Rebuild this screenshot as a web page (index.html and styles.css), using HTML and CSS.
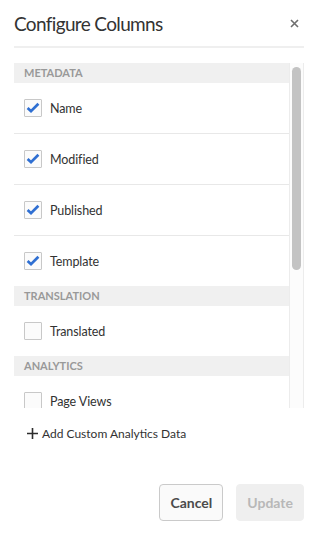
FILE: index.html
```html
<!DOCTYPE html>
<html lang="en">
<head>
    <meta charset="UTF-8">
    <meta name="viewport" content="width=device-width, initial-scale=1.0">
    <title>Configure Columns</title>
    <link rel="stylesheet" href="styles.css">
</head>
<body>
    <div class="dialog">
        <header class="dialog-header">
            <h1>Configure Columns</h1>
            <button class="close-btn" aria-label="Close">
                <svg width="9" height="9" viewBox="0 0 9 9"><path d="M1 1L8 8M8 1L1 8" stroke="#6e6e6e" stroke-width="1.6"/></svg>
            </button>
        </header>

        <div class="column-list">
            <div class="list-scroll">
                <div class="section-title">METADATA</div>
                <label class="row"><span class="checkbox"><svg width="16" height="16" viewBox="0 0 16 16"><path d="M2.6 8L6 11.2L13.4 3.8" fill="none" stroke="#2f6fd2" stroke-width="2.7"/></svg></span>Name</label>
                <label class="row"><span class="checkbox"><svg width="16" height="16" viewBox="0 0 16 16"><path d="M2.6 8L6 11.2L13.4 3.8" fill="none" stroke="#2f6fd2" stroke-width="2.7"/></svg></span>Modified</label>
                <label class="row"><span class="checkbox"><svg width="16" height="16" viewBox="0 0 16 16"><path d="M2.6 8L6 11.2L13.4 3.8" fill="none" stroke="#2f6fd2" stroke-width="2.7"/></svg></span>Published</label>
                <label class="row"><span class="checkbox"><svg width="16" height="16" viewBox="0 0 16 16"><path d="M2.6 8L6 11.2L13.4 3.8" fill="none" stroke="#2f6fd2" stroke-width="2.7"/></svg></span>Template</label>

                <div class="section-title">TRANSLATION</div>
                <label class="row"><span class="checkbox"></span>Translated</label>

                <div class="section-title">ANALYTICS</div>
                <label class="row"><span class="checkbox"></span>Page Views</label>
            </div>
            <div class="scrollbar">
                <div class="thumb"></div>
            </div>
        </div>

        <a class="add-link" href="#">
            <svg class="plus" width="11" height="11" viewBox="0 0 11 11"><path d="M5.5 0V11M0 5.5H11" stroke="#2c2c2c" stroke-width="1.6"/></svg>
            Add Custom Analytics Data
        </a>

        <footer class="dialog-footer">
            <button class="btn">Cancel</button>
            <button class="btn btn-disabled" disabled>Update</button>
        </footer>
    </div>
</body>
</html>
```

FILE: styles.css
```css
body {
    font-family: Lato, "Open Sans", sans-serif;
    margin: 0;
    padding: 0;
    background: #fff;
    color: #323232;
}

.dialog {
    padding: 0 14px;
}

.dialog-header {
    display: flex;
    justify-content: space-between;
    align-items: center;
    height: 46px;
    border-bottom: 2px solid #efefef;
}

.dialog-header h1 {
    margin: 0;
    font-size: 19px;
    font-weight: 400;
    letter-spacing: -0.65px;
    color: #333;
}

.close-btn {
    background: none;
    border: none;
    padding: 0;
    margin-right: 5px;
    display: flex;
}

.column-list {
    display: flex;
    height: 345px;
    margin-top: 15px;
}

.list-scroll {
    flex: 1;
    overflow: hidden;
}

.section-title {
    height: 20px;
    line-height: 20px;
    padding-left: 10px;
    background: #f0f0f0;
    color: #999;
    font-size: 11px;
    font-weight: 700;
}

.row {
    display: flex;
    align-items: center;
    height: 50px;
    padding-left: 10px;
    font-size: 12.5px;
    letter-spacing: -0.1px;
    border-bottom: 1px solid #e8e8e8;
}

.row:has(+ .section-title) {
    border-bottom: none;
}

.checkbox {
    width: 16px;
    height: 16px;
    border: 1px solid #c8c8c8;
    border-radius: 1px;
    background: #fbfbfb;
    margin-right: 8px;
    display: flex;
    align-items: center;
    justify-content: center;
}

.scrollbar {
    width: 13px;
    border-left: 1px solid #ececec;
    border-right: 1px solid #ececec;
    background: #fcfcfc;
    padding-top: 4px;
    display: flex;
    justify-content: center;
}

.thumb {
    width: 9px;
    height: 203px;
    border-radius: 5px;
    background: #c3c3c3;
}

.add-link {
    display: flex;
    align-items: center;
    margin-top: 18px;
    padding-left: 13px;
    font-size: 12px;
    color: #323232;
    text-decoration: none;
}

.plus {
    margin-right: 4px;
}

.dialog-footer {
    display: flex;
    justify-content: flex-end;
    gap: 13px;
    margin-top: 43px;
}

.btn {
    height: 37px;
    padding: 0 10px;
    font-family: inherit;
    font-size: 14px;
    font-weight: 700;
    color: #4b4b4b;
    background: #fafafa;
    border: 1px solid #cacaca;
    border-radius: 4px;
}

.btn-disabled {
    background: #efefef;
    border-color: #efefef;
    color: #b8b8b8;
}
```
